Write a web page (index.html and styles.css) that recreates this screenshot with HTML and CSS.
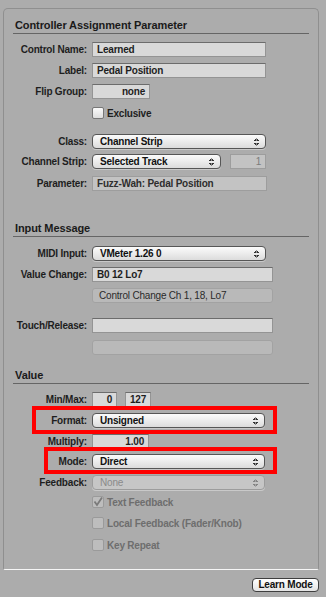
FILE: index.html
```html
<!DOCTYPE html>
<html lang="en">
<head>
  <meta charset="UTF-8" />
  <title>Controller Assignment</title>
  <link rel="stylesheet" href="styles.css">
</head>
<body>
  <div class="window">
    <div class="group">
      <h2 class="title">Controller Assignment Parameter</h2>

      <div class="row r-first">
        <span class="lbl">Control Name:</span>
        <div class="field w174">Learned</div>
      </div>
      <div class="row">
        <span class="lbl">Label:</span>
        <div class="field w174">Pedal Position</div>
      </div>
      <div class="row">
        <span class="lbl">Flip Group:</span>
        <div class="field w58 right">none</div>
      </div>
      <div class="check-row r-excl">
        <span class="box"></span>
        <span>Exclusive</span>
      </div>

      <div class="row r-class">
        <span class="lbl">Class:</span>
        <div class="popup w174">Channel Strip<span class="arrows"></span></div>
      </div>
      <div class="row r-strip">
        <span class="lbl">Channel Strip:</span>
        <div class="popup w129">Selected Track<span class="arrows"></span></div>
        <div class="field w36 right dis dim">1</div>
      </div>
      <div class="row r-param">
        <span class="lbl">Parameter:</span>
        <div class="field w175 dis">Fuzz-Wah: Pedal Position</div>
      </div>

      <h2 class="title t-input">Input Message</h2>

      <div class="row r-midi">
        <span class="lbl">MIDI Input:</span>
        <div class="popup w174">VMeter 1.26 0<span class="arrows"></span></div>
      </div>
      <div class="row">
        <span class="lbl">Value Change:</span>
        <div class="field w181">B0 12 Lo7</div>
      </div>
      <div class="row">
        <span class="lbl"></span>
        <div class="field w181 info">Control Change Ch 1, 18, Lo7</div>
      </div>
      <div class="row r-touch">
        <span class="lbl">Touch/Release:</span>
        <div class="field w181"></div>
      </div>
      <div class="row r-empty">
        <span class="lbl"></span>
        <div class="field w181 info"></div>
      </div>

      <h2 class="title t-value">Value</h2>

      <div class="row r-minmax">
        <span class="lbl">Min/Max:</span>
        <div class="field w25 right">0</div>
        <div class="field w26 right">127</div>
      </div>
      <div class="row marked">
        <span class="lbl">Format:</span>
        <div class="popup w173">Unsigned<span class="arrows"></span></div>
        <span class="mark mark-format"></span>
      </div>
      <div class="row">
        <span class="lbl">Multiply:</span>
        <div class="field w57 right">1.00</div>
      </div>
      <div class="row marked r-mode">
        <span class="lbl">Mode:</span>
        <div class="popup w173">Direct<span class="arrows"></span></div>
        <span class="mark mark-mode"></span>
      </div>
      <div class="row">
        <span class="lbl">Feedback:</span>
        <div class="popup w173 off">None<span class="arrows"></span></div>
      </div>

      <div class="check-row off r-text">
        <span class="box">
          <svg width="12" height="12" viewBox="0 0 12 12"><path d="M2.5 5.5 L5 9 L10 1.5" fill="none" stroke="#7a7a7a" stroke-width="1.8"/></svg>
        </span>
        <span>Text Feedback</span>
      </div>
      <div class="check-row off r-local">
        <span class="box"></span>
        <span>Local Feedback (Fader/Knob)</span>
      </div>
      <div class="check-row off r-key">
        <span class="box"></span>
        <span>Key Repeat</span>
      </div>
    </div>

    <div class="footer">
      <button class="btn">Learn Mode</button>
    </div>
  </div>
</body>
</html>
```

FILE: styles.css
```css
body {
  margin: 0;
  background: #acacac;
  font-family: "Liberation Sans", Arial, sans-serif;
  font-size: 10px;
  font-weight: bold;
  letter-spacing: -0.2px;
  color: #1e1e1e;
}
.window {
  width: 326px;
  height: 597px;
  padding: 8px 0 0 3px;
  box-sizing: border-box;
}
.group {
  width: 316px;
  height: 562px;
  box-sizing: border-box;
  border: 1px solid #8f8f8f;
  border-bottom-color: #f6f6f6;
  border-radius: 5px 5px 2px 2px;
  display: flex;
  flex-direction: column;
}
.title {
  margin: 9px 9px 0 9px;
  padding-left: 2px;
  height: 15px;
  line-height: 15px;
  font-size: 11px;
  letter-spacing: -0.1px;
  border-bottom: 1px solid #656565;
  color: #1a1a1a;
}
.t-input { margin-top: 30px; }
.t-value { margin-top: 13px; }

.row {
  display: flex;
  align-items: center;
  gap: 5px;
  height: 15px;
  margin-top: 6px;
  position: relative;
}
.lbl {
  width: 83px;
  text-align: right;
  flex: none;
}
.r-first { margin-top: 8px; }
.r-class { margin-top: 15px; }
.r-strip { margin-top: 5px; }
.r-param { margin-top: 7px; }
.r-midi { margin-top: 9px; }
.r-touch { margin-top: 15px; }
.r-empty { margin-top: 7px; }
.r-minmax { margin-top: 8px; }
.r-mode { margin-top: 5px; }

.field {
  height: 15px;
  box-sizing: border-box;
  background: #d9d9d9;
  border: 1px solid #949494;
  border-top-color: #6c6c6c;
  padding: 0 4px;
  line-height: 13px;
  white-space: nowrap;
  overflow: hidden;
}
.field.right { text-align: right; }
.field.dis {
  background: #c3c3c3;
  border-color: #9d9d9d;
  color: #2e2e2e;
}
.field.dim { color: #7c7c7c; font-weight: normal; }
.field.info {
  background: #b9b9b9;
  border: 1px solid #a2a2a2;
  border-radius: 3px;
  font-weight: normal;
  color: #2a2a2a;
  padding-left: 6px;
}
.r-strip .field { margin-left: 4px; }
.r-minmax .field + .field { margin-left: 3px; }

.w25 { width: 25px; }
.w26 { width: 26px; }
.w36 { width: 36px; }
.w57 { width: 57px; }
.w58 { width: 58px; }
.w129 { width: 129px; }
.w173 { width: 173px; }
.w174 { width: 174px; }
.w175 { width: 175px; }
.w181 { width: 181px; }

.popup {
  position: relative;
  height: 15px;
  box-sizing: border-box;
  border: 1px solid #565656;
  border-radius: 4px;
  background: linear-gradient(#fbfbfb, #e9e9e9 60%, #dcdcdc);
  box-shadow: 0 1px 0 rgba(255,255,255,0.35);
  padding-left: 7px;
  line-height: 13px;
  color: #111;
}
.popup .arrows {
  position: absolute;
  right: 6px;
  top: 3px;
  width: 5px;
  height: 8px;
  background:
    linear-gradient(to bottom right, transparent 50%, #333 50%) 0 0 / 2.5px 3px no-repeat,
    linear-gradient(to bottom left, transparent 50%, #333 50%) 2.5px 0 / 2.5px 3px no-repeat,
    linear-gradient(to top right, transparent 50%, #333 50%) 0 5px / 2.5px 3px no-repeat,
    linear-gradient(to top left, transparent 50%, #333 50%) 2.5px 5px / 2.5px 3px no-repeat;
}
.popup.off {
  background: #c6c6c6;
  border-color: #9c9c9c;
  color: #8a8a8a;
  font-weight: normal;
}
.popup.off .arrows { opacity: 0.45; }

.check-row {
  display: flex;
  align-items: center;
  gap: 3px;
  height: 12px;
  padding-left: 88px;
}
.box {
  width: 12px;
  height: 12px;
  box-sizing: border-box;
  border: 1px solid #777;
  border-radius: 2px;
  background: linear-gradient(#fafafa, #dedede);
  flex: none;
}
.box svg { display: block; margin: -1px; }
.check-row.off { color: #6e6e6e; font-weight: bold; }
.check-row.off .box {
  background: #bdbdbd;
  border-color: #9a9a9a;
}
.r-excl { margin-top: 8px; }
.r-text { margin-top: 6px; }
.r-local { margin-top: 9px; }
.r-key { margin-top: 10px; }

.mark {
  position: absolute;
  top: -7px;
  height: 28px;
  box-sizing: border-box;
  border: 4px solid #ff0000;
  pointer-events: none;
}
.mark-format { left: 28px; width: 245px; }
.mark-mode { left: 40px; width: 233px; height: 27px; }

.footer {
  display: flex;
  justify-content: flex-end;
  width: 316px;
  margin-top: 8px;
}
.btn {
  height: 14px;
  width: 67px;
  padding: 0;
  border: 1px solid #3e3e3e;
  border-radius: 4px;
  background: linear-gradient(#ffffff, #e4e4e4);
  font: bold 10px "Liberation Sans", Arial, sans-serif;
  letter-spacing: -0.2px;
  line-height: 12px;
  color: #111;
}
```
